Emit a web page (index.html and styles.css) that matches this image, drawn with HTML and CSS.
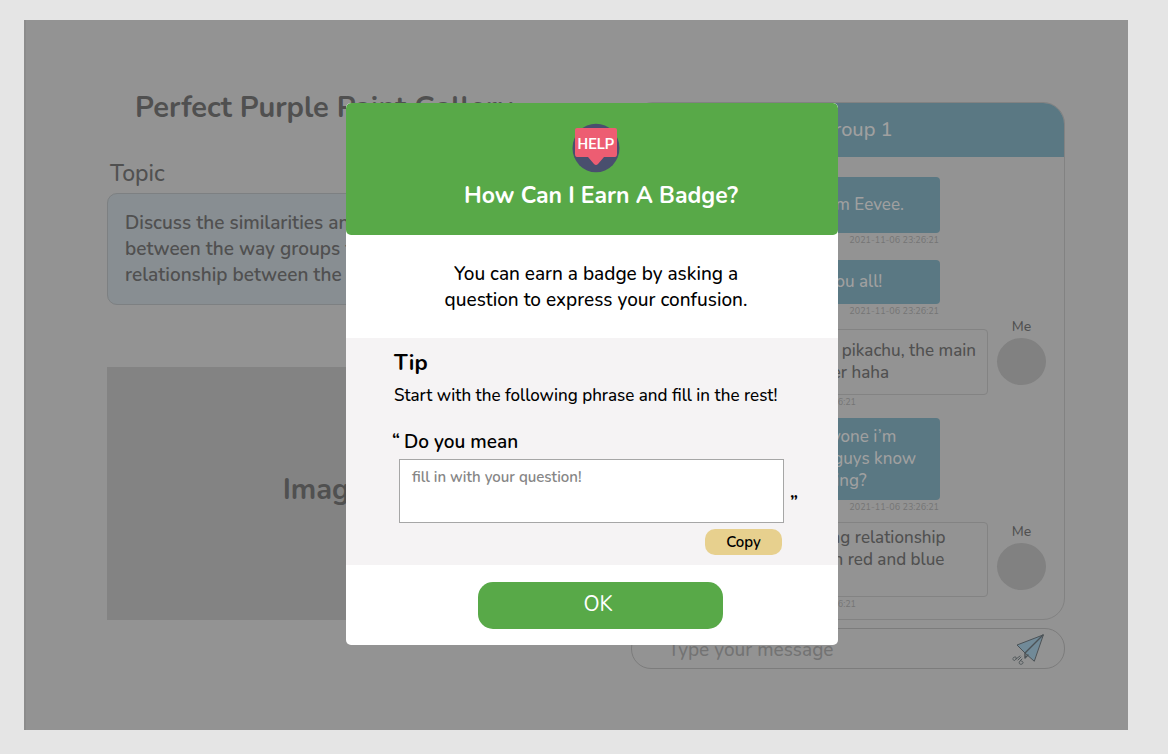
FILE: index.html
```html
<!DOCTYPE html>
<html lang="en">
<head>
<meta charset="utf-8">
<meta name="viewport" content="width=device-width, initial-scale=1">
<title>Perfect Purple Paint Gallery</title>
<link rel="stylesheet" href="styles.css">
</head>
<body>
<div class="frame">
  <main class="room">
    <section class="lesson">
      <h1 class="lesson-title">Perfect Purple Paint Gallery</h1>
      <h2 class="topic-label">Topic</h2>
      <p class="topic">Discuss the similarities and differences<br>between the way groups form and the<br>relationship between the colors</p>
      <div class="image-slot">Image</div>
    </section>
    <section class="side">
      <div class="chat">
        <h2 class="chat-title">Group 1</h2>
        <div class="messages">
          <article class="message">
            <p class="bubble roomy">Hello, I’m Eevee.</p>
            <time class="stamp">2021-11-06 23:26:21</time>
          </article>
          <article class="message reply">
            <p class="bubble">Hello, you all!</p>
            <time class="stamp">2021-11-06 23:26:21</time>
          </article>
          <article class="message own">
            <div class="content">
              <p class="bubble">Hey, I’m pikachu, the main<br>character haha</p>
              <time class="stamp">2021-11-06 23:26:21</time>
            </div>
            <div class="author">Me<span class="avatar"></span></div>
          </article>
          <article class="message">
            <p class="bubble snug">Hi everyone i’m<br>do you guys know<br>everything?</p>
            <time class="stamp">2021-11-06 23:26:21</time>
          </article>
          <article class="message own long">
            <div class="content">
              <p class="bubble">confusing relationship<br>between red and blue</p>
              <time class="stamp">2021-11-06 23:26:21</time>
            </div>
            <div class="author">Me<span class="avatar"></span></div>
          </article>
        </div>
      </div>
      <form class="composer">
        <input class="composer-input" type="text" aria-label="Message" placeholder="Type your message">
        <button class="send" type="button" aria-label="Send">
          <svg width="32" height="32" viewBox="0 0 32 32" fill="none" stroke="#4b5256" stroke-linejoin="round" stroke-linecap="round">
            <path d="M31 2 5 12 13 20 22 28Z" fill="#718a98"/>
            <path d="M31 2 13 20V25L16 22" stroke-width="1.4"/>
            <path d="M1 25c2-2 4-1 3 1s-3 2-3 0M4 26l4-3M6 27l3-3M10 26l-2 2c-2 2 0 4 2 3s1-3-1-3" stroke-width=".9"/>
          </svg>
        </button>
      </form>
    </section>
  </main>

  <div class="overlay">
    <div class="dialog" role="dialog" aria-modal="true" aria-labelledby="dialog-title">
      <header class="dialog-header">
        <svg class="help" width="48" height="50" viewBox="0 0 48 50" role="img" aria-label="Help">
          <ellipse cx="24" cy="25" rx="23.5" ry="24.3" fill="#494f6e"/>
          <path d="M5 5H43Q45 5 45 7V31Q45 34 43 34H32L26 41Q24 43 22 41L16 34H5Q3 34 3 31V7Q3 5 5 5Z" fill="#ed5d72"/>
          <text class="help-text" x="24" y="26" text-anchor="middle">HELP</text>
        </svg>
        <h2 class="dialog-title" id="dialog-title">How Can I Earn A Badge?</h2>
      </header>
      <p class="intro">You can earn a badge by asking a<br>question to express your confusion.</p>
      <section class="tip">
        <h3 class="tip-title">Tip</h3>
        <p class="tip-text">Start with the following phrase and fill in the rest!</p>
        <label class="phrase" for="question"><span class="quote">“</span>Do you mean</label>
        <div class="answer">
          <textarea class="question" id="question" placeholder="fill in with your question!"></textarea>
          <span class="quote closing">”</span>
        </div>
        <button class="copy" type="button">Copy</button>
      </section>
      <footer class="dialog-footer">
        <button class="ok" type="button">OK</button>
      </footer>
    </div>
  </div>
</div>
</body>
</html>
```
FILE: styles.css
```css
* { box-sizing: border-box; }

body {
  margin: 0;
  padding: 20px 40px 24px 24px;
  background: #e5e5e5;
  color: #000;
  font-family: Nunito, Lato, "Open Sans", sans-serif;
}

h1, h2, h3, p { margin: 0; font-weight: 400; }

button, input, textarea { font-family: inherit; }

.frame {
  position: relative;
  min-height: calc(100vh - 44px);
  border-left: 2px solid #8c8c8c;
  background: #939393;
}

.room {
  display: grid;
  grid-template-columns: minmax(0, 1fr) minmax(0, 1fr);
  gap: 90px;
  padding: 68px 63px 61px 81px;
  color: #505050;
}

.lesson { display: flex; flex-direction: column; }

.lesson-title {
  font-size: 29px;
  line-height: 40px;
  font-weight: 700;
  text-align: center;
  white-space: nowrap;
}

.topic-label {
  margin-top: 32px;
  padding-left: 3px;
  font-size: 23px;
  line-height: 28px;
  font-weight: 500;
}

.topic {
  margin-top: 5px;
  padding: 16px 17px;
  border: 1px solid #7d8082;
  border-radius: 10px;
  background: #888e92;
  font-size: 19px;
  line-height: 26px;
  font-weight: 600;
}

.image-slot {
  display: grid;
  place-items: center;
  height: 253px;
  margin-top: 62px;
  padding-bottom: 8px;
  background: #838383;
  font-size: 29px;
  font-weight: 700;
}

.side { padding-top: 14px; }

.chat {
  overflow: hidden;
  border: 1px solid #828282;
  border-radius: 22px;
}

.chat-title {
  padding-left: 16px;
  background: #5a7883;
  color: #a0a0a0;
  font-size: 20px;
  line-height: 54px;
  font-weight: 500;
  text-align: center;
}

.messages {
  display: flex;
  flex-direction: column;
  padding: 20px 18px 9px 125px;
}

.message, .content { display: flex; flex-direction: column; }

.message {
  margin-top: 10px;
  padding-right: 106px;
}

.message:first-child { margin-top: 0; }
.message.reply { margin-top: 14px; }

.message.own {
  flex-direction: row;
  gap: 9px;
  margin-top: 2px;
  padding-right: 0;
}

.message.long { margin-top: 9px; }

.content {
  flex: 1;
  min-width: 0;
  padding-top: 10px;
}

.bubble {
  padding: 11px 8px 11px 20px;
  border-radius: 4px;
  background: #5a7883;
  color: #a0a0a0;
  font-size: 17px;
  line-height: 22px;
  font-weight: 500;
  white-space: nowrap;
}

.roomy { padding-block: 17px; }
.snug { padding-block: 8px; }

.own .bubble {
  padding: 10px 8px 10px 18px;
  border: 1px solid #838383;
  background: transparent;
  color: #505050;
}

.long .content { padding-top: 0; }
.long .bubble { padding-block: 4px 25px; }

.stamp {
  margin-top: 1px;
  padding-right: 1px;
  color: #757575;
  font-size: 9px;
  line-height: 12px;
  text-align: right;
}

.own .stamp { padding-right: 132px; }

.author {
  width: 49px;
  font-size: 14px;
  line-height: 15px;
  font-weight: 500;
  text-align: center;
}

.long .author { padding-top: 2px; }

.avatar {
  display: block;
  height: 47px;
  margin-top: 4px;
  border-radius: 50%;
  background: #818181;
}

.composer {
  display: flex;
  align-items: center;
  margin-top: 8px;
  padding: 0 20px 0 36px;
  border: 1px solid #7c7c7c;
  border-radius: 20px;
}

.composer-input {
  flex: 1;
  min-width: 0;
  height: 39px;
  padding: 2px 0 0;
  border: 0;
  background: none;
  color: #505050;
  font-size: 19px;
  font-weight: 500;
}

.composer-input::placeholder { color: #737373; }

.send {
  padding: 0;
  border: 0;
  background: none;
  line-height: 0;
}

.overlay {
  position: absolute;
  inset: 0;
  display: grid;
  place-items: center;
  padding: 0 0 2px 30px;
}

.dialog {
  width: 492px;
  overflow: hidden;
  border-radius: 5px;
  background: #fff;
}

.dialog-header {
  display: flex;
  flex-direction: column;
  align-items: center;
  padding: 20px 0 23px 18px;
  border-radius: 5px;
  background: #58a948;
  color: #fff;
}

.help { margin-right: 10px; }

.help-text {
  fill: #fff;
  font-family: Roboto, sans-serif;
  font-size: 15px;
  font-weight: 500;
}

.dialog-title {
  margin-top: 7px;
  font-size: 23px;
  line-height: 32px;
  font-weight: 700;
}

.intro {
  padding: 26px 0 25px 8px;
  font-size: 19px;
  line-height: 26px;
  font-weight: 500;
  text-align: center;
}

.tip {
  display: flex;
  flex-direction: column;
  padding: 12px 40px 10px 48px;
  background: #f5f3f4;
}

.tip-title {
  font-size: 22px;
  line-height: 26px;
  font-weight: 700;
}

.tip-text {
  margin-top: 8px;
  font-size: 17px;
  line-height: 24px;
  font-weight: 500;
}

.phrase {
  display: flex;
  gap: 4px;
  margin: 22px 0 5px -2px;
  font-size: 19px;
  line-height: 24px;
  font-weight: 600;
}

.quote {
  font-size: 18px;
  line-height: 20px;
  font-weight: 700;
}

.answer {
  display: flex;
  align-items: flex-end;
  gap: 6px;
  padding-left: 5px;
}

.question {
  flex: 1;
  height: 64px;
  padding: 7px 12px;
  border: 1px solid #a6a6a6;
  background: #fff;
  font-size: 15px;
  line-height: 20px;
  font-weight: 600;
  resize: none;
}

.question::placeholder { color: #868686; }

.closing { padding-bottom: 11px; }

.copy {
  align-self: flex-end;
  width: 77px;
  margin: 6px 16px 0 0;
  padding: 0;
  border: 0;
  border-radius: 10px;
  background: #e7d08e;
  color: #000;
  font-size: 15px;
  line-height: 26px;
  font-weight: 600;
}

.dialog-footer {
  display: flex;
  justify-content: center;
  padding: 17px 0 16px 16px;
}

.ok {
  width: 245px;
  padding: 0 4px 2px 0;
  border: 0;
  border-radius: 15px;
  background: #58a948;
  color: #fff;
  font-size: 21px;
  line-height: 45px;
}
```
